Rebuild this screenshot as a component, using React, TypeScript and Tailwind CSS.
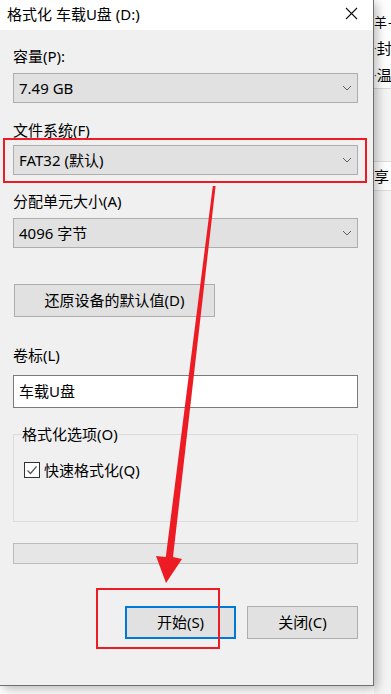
import React from "react";

const font = { fontFamily: '"Noto Sans", "Noto Sans CJK SC", sans-serif' };

function Chevron() {
  return (
    <svg width="10" height="6" viewBox="0 0 10 6" className="shrink-0">
      <polyline points="1,1 5,5 9,1" fill="none" stroke="#606060" strokeWidth="1" />
    </svg>
  );
}

function Combo({ text, className = "" }: { text: string; className?: string }) {
  return (
    <div
      className={`h-[30px] w-[345px] bg-[#e1e1e1] border border-[#adadad] flex items-center justify-between pl-[5px] pr-[5px] ${className}`}
    >
      <span className="text-[15px] leading-[20px] text-black">{text}</span>
      <Chevron />
    </div>
  );
}

function Label({ text, className = "" }: { text: string; className?: string }) {
  return <div className={`text-[15px] leading-[20px] text-black ${className}`}>{text}</div>;
}

export default function App() {
  return (
    <div className="relative w-[391px] h-[694px] bg-white overflow-hidden flex" style={font}>
      {/* Dialog */}
      <div className="relative z-10 w-[374px] h-[686px] shrink-0 bg-[#f0f0f0] border-r border-b border-[#707070] flex flex-col shadow-[3px_3px_10px_rgba(0,0,0,0.28)]">
        {/* Title bar */}
        <div className="h-[30px] bg-white flex items-center justify-between pl-[7px] pr-[15px] shrink-0">
          <span className="text-[15px] leading-[20px] text-black -mt-[3px]">格式化 车载U盘 (D:)</span>
          <svg width="13" height="13" viewBox="0 0 13 13" className="-mt-[4px]">
            <line x1="1" y1="1" x2="12" y2="12" stroke="#111" strokeWidth="1.1" />
            <line x1="12" y1="1" x2="1" y2="12" stroke="#111" strokeWidth="1.1" />
          </svg>
        </div>

        {/* Body */}
        <div className="flex flex-col pl-[13px]">
          <Label text="容量(P):" className="mt-[16px]" />
          <Combo text="7.49 GB" className="mt-[7px]" />
          <Label text="文件系统(F)" className="mt-[17px]" />
          <Combo text="FAT32 (默认)" className="mt-[5px]" />
          <Label text="分配单元大小(A)" className="mt-[16px]" />
          <Combo text="4096 字节" className="mt-[7px]" />

          <div className="mt-[36px] ml-[1px] w-[201px] h-[33px] bg-[#e1e1e1] border border-[#adadad] flex items-center justify-center text-[15px] text-black">
            还原设备的默认值(D)
          </div>

          <Label text="卷标(L)" className="mt-[28px]" />
          <div className="mt-[10px] w-[345px] h-[33px] bg-white border border-[#7a7a7a] flex items-center pl-[5px] text-[15px] text-black">
            车载U盘
          </div>

          <fieldset className="mt-[16px] w-[345px] h-[98px] border border-[#dcdcdc] px-[8px] m-0">
            <legend className="text-[15px] leading-[20px] text-black px-0">格式化选项(O)</legend>
            <div className="mt-[16px] ml-[2px] flex items-center gap-[4px]">
              <div className="w-[16px] h-[16px] border border-[#333] bg-white flex items-center justify-center">
                <svg width="12" height="12" viewBox="0 0 12 12">
                  <polyline points="1.5,6.5 4.5,9.5 10.5,2.5" fill="none" stroke="#555" strokeWidth="1.2" />
                </svg>
              </div>
              <span className="text-[15px] leading-[20px] text-black">快速格式化(Q)</span>
            </div>
          </fieldset>

          <div className="mt-[21px] w-[345px] h-[21px] bg-[#e6e6e6] border border-[#bcbcbc]" />

          <div className="mt-[42px] w-[345px] flex justify-end gap-[11px]">
            <div className="w-[111px] h-[33px] bg-[#e1e1e1] border-2 border-[#0078d7] flex items-center justify-center text-[15px] text-black">
              开始(S)
            </div>
            <div className="w-[111px] h-[33px] bg-[#e1e1e1] border border-[#adadad] flex items-center justify-center text-[15px] text-black">
              关闭(C)
            </div>
          </div>
        </div>
      </div>

      {/* Background window strip */}
      <div className="flex-1 flex flex-col overflow-hidden text-[15px] text-black">
        <div className="h-[88px] bg-white flex flex-col">
          <div className="mt-[12px] leading-[20px] whitespace-nowrap flex items-center text-[13px]">
            <span>羊</span>
            <span className="ml-[1px]">-</span>
          </div>
          <div className="mt-[6px] leading-[20px] whitespace-nowrap flex items-center">
            <span className="text-[10px] text-[#333] w-[6px]">·</span>封
          </div>
          <div className="mt-[7px] leading-[20px] whitespace-nowrap flex items-center">
            <span className="text-[10px] text-[#333] w-[6px]">·</span>温
          </div>
        </div>
        <div className="h-[73px] bg-[#f4f4f4] border-t border-[#d9d9d9]" />
        <div className="h-[30px] bg-white border-t border-b border-[#dcdcdc] flex items-center whitespace-nowrap">
          <span>享</span>
        </div>
        <div className="flex-1 bg-[#f4f4f4]" />
      </div>

      {/* Annotations */}
      <div className="absolute left-[3px] top-[138px] w-[364px] h-[45px] border-2 border-[#ed1c24] z-20" />
      <div className="absolute left-[96px] top-[588px] w-[124px] h-[61px] border-2 border-[#ed1c24] z-20" />
      <svg className="absolute left-0 top-0 z-20" width="391" height="694" viewBox="0 0 391 694">
        <polygon
          points="212.8,186 215.6,186 173,557 182,559 166,583 156,556 165.8,557"
          fill="#ed1c24"
        />
      </svg>
    </div>
  );
}
